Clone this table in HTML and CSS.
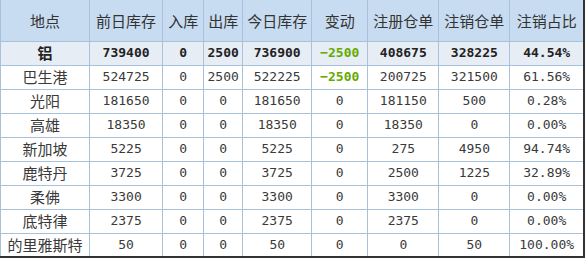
FILE: index.html
```html
<!DOCTYPE html>
<html lang="zh-CN">
<head>
    <meta charset="UTF-8">
    <title>铝库存</title>
    <link rel="stylesheet" href="styles.css">
</head>
<body>
    <table class="stock">
        <colgroup>
            <col style="width:89px">
            <col style="width:73px">
            <col style="width:41px">
            <col style="width:39px">
            <col style="width:69px">
            <col style="width:56px">
            <col style="width:71px">
            <col style="width:71px">
            <col style="width:74px">
        </colgroup>
        <thead>
            <tr>
                <th>地点</th>
                <th>前日库存</th>
                <th>入库</th>
                <th>出库</th>
                <th>今日库存</th>
                <th>变动</th>
                <th>注册仓单</th>
                <th>注销仓单</th>
                <th>注销占比</th>
            </tr>
        </thead>
        <tbody>
            <tr class="total">
                <td class="place">铝</td>
                <td>739400</td>
                <td>0</td>
                <td>2500</td>
                <td>736900</td>
                <td class="down">−2500</td>
                <td>408675</td>
                <td>328225</td>
                <td>44.54%</td>
            </tr>
            <tr>
                <td class="place">巴生港</td>
                <td>524725</td>
                <td>0</td>
                <td>2500</td>
                <td>522225</td>
                <td class="down">−2500</td>
                <td>200725</td>
                <td>321500</td>
                <td>61.56%</td>
            </tr>
            <tr>
                <td class="place">光阳</td>
                <td>181650</td>
                <td>0</td>
                <td>0</td>
                <td>181650</td>
                <td>0</td>
                <td>181150</td>
                <td>500</td>
                <td>0.28%</td>
            </tr>
            <tr>
                <td class="place">高雄</td>
                <td>18350</td>
                <td>0</td>
                <td>0</td>
                <td>18350</td>
                <td>0</td>
                <td>18350</td>
                <td>0</td>
                <td>0.00%</td>
            </tr>
            <tr>
                <td class="place">新加坡</td>
                <td>5225</td>
                <td>0</td>
                <td>0</td>
                <td>5225</td>
                <td>0</td>
                <td>275</td>
                <td>4950</td>
                <td>94.74%</td>
            </tr>
            <tr>
                <td class="place">鹿特丹</td>
                <td>3725</td>
                <td>0</td>
                <td>0</td>
                <td>3725</td>
                <td>0</td>
                <td>2500</td>
                <td>1225</td>
                <td>32.89%</td>
            </tr>
            <tr>
                <td class="place">柔佛</td>
                <td>3300</td>
                <td>0</td>
                <td>0</td>
                <td>3300</td>
                <td>0</td>
                <td>3300</td>
                <td>0</td>
                <td>0.00%</td>
            </tr>
            <tr>
                <td class="place">底特律</td>
                <td>2375</td>
                <td>0</td>
                <td>0</td>
                <td>2375</td>
                <td>0</td>
                <td>2375</td>
                <td>0</td>
                <td>0.00%</td>
            </tr>
            <tr>
                <td class="place">的里雅斯特</td>
                <td>50</td>
                <td>0</td>
                <td>0</td>
                <td>50</td>
                <td>0</td>
                <td>0</td>
                <td>50</td>
                <td>100.00%</td>
            </tr>
        </tbody>
    </table>
</body>
</html>
```

FILE: styles.css
```css
* {
    margin: 0;
    padding: 0;
    box-sizing: border-box;
}
body {
    background: #fff;
    font-family: "DejaVu Sans Mono", "Noto Sans CJK SC", monospace;
    color: #333;
}
.stock {
    width: 585px;
    table-layout: fixed;
    border-collapse: collapse;
    border-left: 1px solid #333;
    border-right: 2px solid #333;
    border-bottom: 2px solid #333;
}
.stock th,
.stock td {
    border: 1px solid #a9c2dc;
    text-align: center;
    white-space: nowrap;
    overflow: hidden;
}
.stock th {
    height: 41px;
    background: #c7dcf0;
    font-family: "Noto Sans CJK SC", sans-serif;
    font-size: 15px;
    font-weight: normal;
    color: #333;
    border-top: none;
}
.stock td {
    height: 24px;
    font-size: 13px;
    line-height: 22px;
    color: #3a3a3a;
}
.stock td.place {
    font-family: "Noto Sans CJK SC", sans-serif;
    font-size: 15px;
}
.stock .total td {
    background: #e7edf5;
    font-weight: bold;
    color: #222;
}
.stock td.down {
    color: #66aa00;
    font-weight: bold;
}
```
